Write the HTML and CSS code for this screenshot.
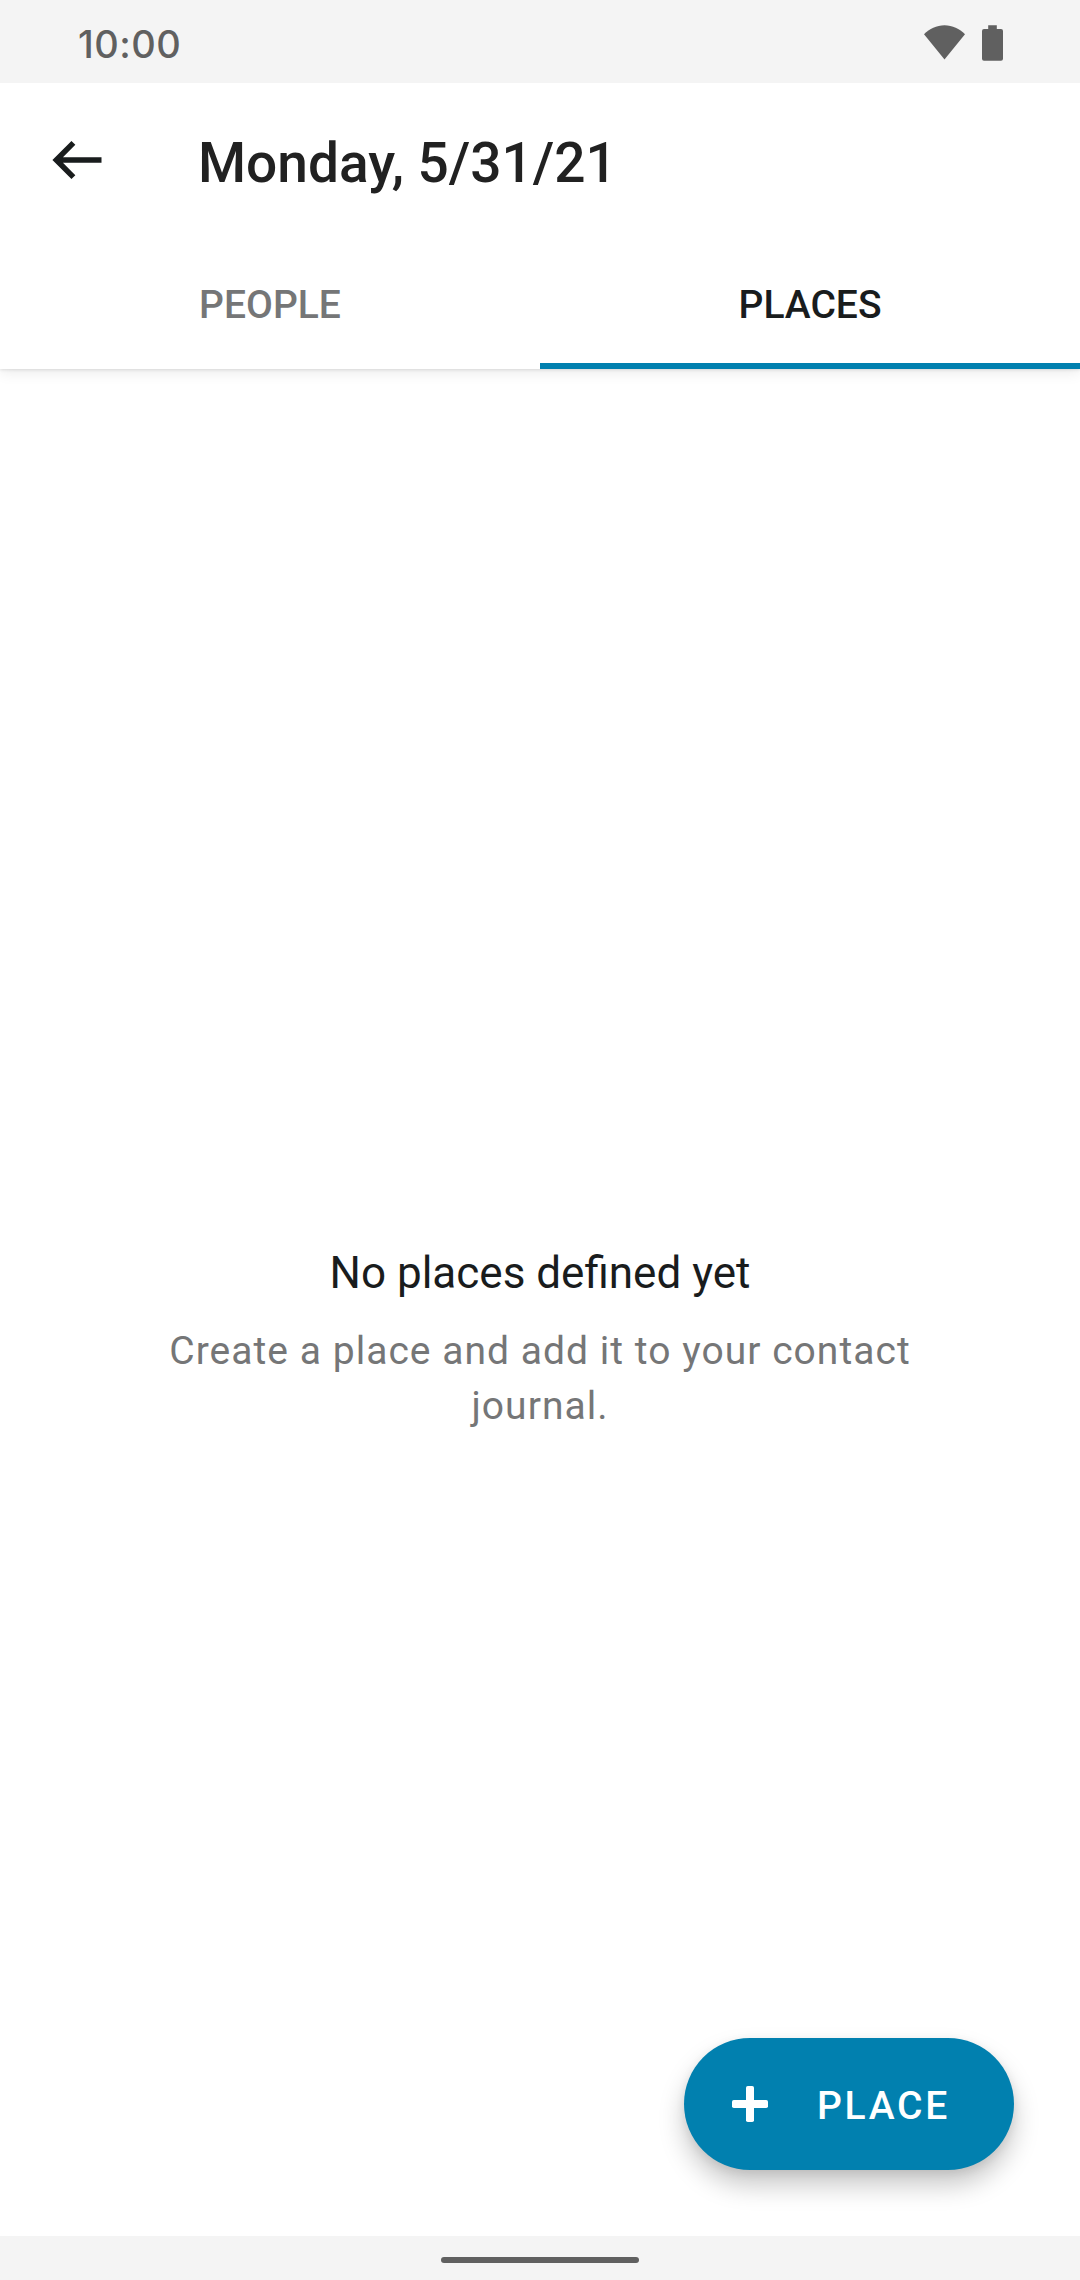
FILE: index.html
```html
<!DOCTYPE html>
<html lang="en">
<head>
<meta charset="utf-8">
<title>Contact journal</title>
<link rel="stylesheet" href="styles.css">
</head>
<body>
<div class="screen">
  <div class="status-bar">
    <span class="clock">10:00</span>
    <div class="status-icons">
      <svg class="wifi" width="41" height="35" viewBox="0 0 41 35"><path d="M20.500 34.500 0 9.200C5.500 3.800 12.500.300 20.500.300S35.500 3.800 41 9.200z"/></svg>
      <svg class="battery" width="21" height="36" viewBox="0 0 21 36"><path d="M6.200.200h8.600V4H19a2 2 0 0 1 2 2v27.700a2 2 0 0 1-2 2H2a2 2 0 0 1-2-2V6a2 2 0 0 1 2-2h4.200z"/></svg>
    </div>
  </div>
  <header class="app-header">
    <div class="toolbar">
      <svg class="back" width="50" height="40" viewBox="0 0 50 40"><path d="M21.400 2.900 4.300 20l17.100 17.100M5 20h44.500"/></svg>
      <h1 class="title">Monday, 5/31/21</h1>
    </div>
    <nav class="tabs">
      <div class="tab"><span>PEOPLE</span></div>
      <div class="tab tab-active"><span>PLACES</span></div>
    </nav>
  </header>
  <main class="content">
    <h2 class="empty-title">No places defined yet</h2>
    <p class="empty-text">Create a place and add it to your contact journal.</p>
    <button class="fab">
      <svg class="plus" width="36" height="36" viewBox="0 0 36 36"><rect x="14" y="0" width="8" height="36" rx="1.800"/><rect x="0" y="14" width="36" height="8" rx="1.800"/></svg>
      <span class="fab-label">PLACE</span>
    </button>
  </main>
  <div class="nav-bar"><div class="handle"></div></div>
</div>
</body>
</html>
```
FILE: styles.css
```css
* { box-sizing: border-box; }
body { margin: 0; font-family: Roboto, sans-serif; background: #fff; }
.screen { width: 1080px; height: 2280px; display: flex; flex-direction: column; overflow: hidden; }
.status-bar { position: relative; z-index: 1; height: 83px; flex: none; background: #f4f4f4; color: #606060; display: flex; align-items: center; justify-content: space-between; padding: 3px 77px 0 78px; }
.clock { font: 500 38px/48px Inter, sans-serif; letter-spacing: .5px; padding-top: 2px; }
.status-icons { display: flex; align-items: center; gap: 17px; fill: #606060; }
.wifi { margin-bottom: 1px; }
.app-header { flex: none; height: 286px; background: #fff; box-shadow: 0 1px 3px rgba(0,0,0,.1), 0 3px 14px rgba(0,0,0,.09); display: flex; flex-direction: column; }
.toolbar { height: 155px; display: flex; align-items: center; padding: 5px 0 0 52px; gap: 96px; }
.back { margin-bottom: 6px; fill: none; stroke: #191c1d; stroke-width: 5.500; }
.title { margin: 0; font-size: 55px; font-weight: 500; line-height: 64px; color: #212121; }
.tabs { flex: 1; display: flex; }
.tab { flex: 1; display: flex; align-items: center; justify-content: center; padding-top: 9px; font-size: 39px; font-weight: 500; color: #757677; border-bottom: 6px solid transparent; }
.tab-active { color: #191c1d; border-bottom-color: #0180af; }
.content { flex: 1; position: relative; display: flex; flex-direction: column; align-items: center; justify-content: center; padding-top: 74px; }
.empty-title { margin: 0; font-size: 44px; font-weight: 400; line-height: 56px; color: #191c1d; }
.empty-text { margin: 23px 0 0; width: 800px; font-size: 39px; line-height: 55px; letter-spacing: 1.030px; color: #757677; text-align: center; }
.fab { position: absolute; right: 66px; bottom: 66px; width: 330px; height: 132px; border: 0; border-radius: 66px; background: #0180af; color: #fff; display: flex; align-items: center; padding: 0 0 0 48px; gap: 49px; font: 500 39px Roboto, sans-serif; letter-spacing: 2.700px; box-shadow: 0 15px 26px rgba(0,0,0,.22), 0 3px 10px rgba(0,0,0,.08); }
.fab-label { padding-top: 4px; }
.plus { fill: #fff; }
.nav-bar { flex: none; height: 44px; background: #f4f4f4; display: flex; align-items: center; justify-content: center; padding-top: 4px; }
.handle { width: 198px; height: 6px; border-radius: 3px; background: #606060; }
```
